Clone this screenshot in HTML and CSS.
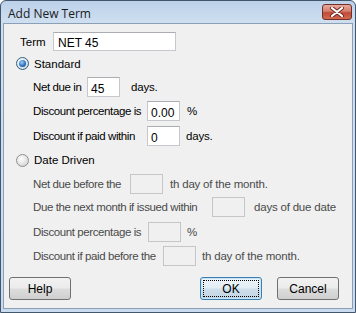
FILE: index.html
```html
<!DOCTYPE html>
<html lang="en">
<head>
    <meta charset="UTF-8">
    <title>Add New Term</title>
    <link rel="stylesheet" href="styles.css">
</head>
<body>
    <div class="window">
        <div class="titlebar">
            <span class="title">Add New Term</span>
            <span class="close-btn">
                <svg width="16" height="10" viewBox="0 0 16 10">
                    <path d="M3 1 L13 9 M13 1 L3 9" stroke="#6b2a22" stroke-width="4" stroke-linecap="round"/>
                    <path d="M3 1 L13 9 M13 1 L3 9" stroke="#fff" stroke-width="2.2" stroke-linecap="round"/>
                </svg>
            </span>
        </div>
        <div class="content">
            <div class="row term-row">
                <span class="term-label">Term</span>
                <div class="field term-field">NET 45</div>
            </div>

            <div class="row radio-row r-std">
                <span class="radio checked"></span>
                <span>Standard</span>
            </div>
            <div class="row sub h24">
                <span class="lbl w54">Net due in</span>
                <div class="field small">45</div>
                <span class="after a11">days.</span>
            </div>
            <div class="row sub h24">
                <span class="lbl w114">Discount percentage is</span>
                <div class="field small">0.00</div>
                <span class="after a7">%</span>
            </div>
            <div class="row sub h25">
                <span class="lbl w114">Discount if paid within</span>
                <div class="field small">0</div>
                <span class="after a6">days.</span>
            </div>

            <div class="row radio-row r-dd">
                <span class="radio"></span>
                <span>Date Driven</span>
            </div>
            <div class="row sub disabled h23">
                <span class="lbl w97">Net due before the</span>
                <div class="field small"></div>
                <span class="after a7">th day of the month.</span>
            </div>
            <div class="row sub disabled h24">
                <span class="lbl w179">Due the next month if issued within</span>
                <div class="field small"></div>
                <span class="after a9">days of due date</span>
            </div>
            <div class="row sub disabled h25">
                <span class="lbl w115">Discount percentage is</span>
                <div class="field small"></div>
                <span class="after a6">%</span>
            </div>
            <div class="row sub disabled h23">
                <span class="lbl w130">Discount if paid before the</span>
                <div class="field small"></div>
                <span class="after a6">th day of the month.</span>
            </div>

            <div class="buttons">
                <button class="btn">Help</button>
                <div class="spacer"></div>
                <button class="btn default"><span class="focus">OK</span></button>
                <button class="btn">Cancel</button>
            </div>
        </div>
    </div>
</body>
</html>
```

FILE: styles.css
```css
body {
    margin: 0;
    background: #fff;
    font-family: "Liberation Sans", Arial, sans-serif;
    font-size: 12px;
}
.window {
    width: 356px;
    height: 313px;
    box-sizing: border-box;
    border: 1px solid #42566c;
    border-radius: 6px 6px 0 0;
    background: linear-gradient(to bottom, #bcd1ea, #cfdff0 22px, #cadbef);
    padding: 0 2px 3px 2px;
    display: flex;
    flex-direction: column;
}
.titlebar {
    height: 22px;
    display: flex;
    align-items: center;
    position: relative;
}
.title {
    margin-left: 5px;
    margin-top: 2px;
    font-family: "Open Sans", "Liberation Sans", sans-serif;
    font-size: 12px;
    color: #1a1a1a;
}
.close-btn {
    position: absolute;
    right: 1px;
    top: 3px;
    width: 30px;
    height: 16px;
    box-sizing: border-box;
    border: 1px solid #6e3028;
    border-radius: 3px;
    background: linear-gradient(to bottom, #e6a99d, #d47d6c 45%, #c14a36 55%, #d26a50);
    display: flex;
    align-items: center;
    justify-content: center;
}
.content {
    flex: 1;
    background: #f0f0f0;
    border: 1px solid #8a9fb8;
    padding: 7px 0 0 0;
    color: #000;
}
.row {
    display: flex;
    align-items: center;
    white-space: nowrap;
}
.term-row {
    height: 21px;
}
.term-label {
    margin-left: 16px;
    width: 33px;
    font-size: 11.5px;
}
.field {
    box-sizing: border-box;
    background: #fff;
    border: 1px solid #c5c8cc;
    border-top-color: #abadb3;
    font-size: 12px;
    flex-shrink: 0;
}
.term-field {
    width: 123px;
    height: 19px;
    padding: 3px 0 0 4px;
}
.small {
    width: 33px;
    height: 20px;
    padding: 4px 0 0 3px;
}
.radio-row {
    padding-left: 12px;
    font-size: 11.5px;
}
.r-std {
    height: 23px;
}
.r-dd {
    height: 24px;
}
.radio {
    width: 13px;
    height: 13px;
    box-sizing: border-box;
    border-radius: 50%;
    border: 1px solid #8f8f8f;
    background: radial-gradient(circle at 40% 35%, #ffffff, #e0e0e0 60%, #c8c8c8);
    margin-right: 5px;
    display: flex;
    align-items: center;
    justify-content: center;
}
.radio.checked {
    border-color: #2c628b;
}
.radio.checked::after {
    content: "";
    width: 7px;
    height: 7px;
    border-radius: 50%;
    background: radial-gradient(circle at 40% 35%, #9fd0f6, #2b73c8 55%, #0d3f7d);
}
.sub {
    padding-left: 29px;
    font-size: 11.5px;
}
.h23 { height: 23px; }
.h24 { height: 24px; }
.h25 { height: 25px; }
.lbl {
    letter-spacing: -0.4px;
    flex-shrink: 0;
}
.w54 { width: 54px; }
.w97 { width: 97px; }
.w114 { width: 114px; }
.w115 { width: 115px; }
.w130 { width: 130px; }
.w179 { width: 179px; }
.after {
    letter-spacing: -0.2px;
}
.a6 { margin-left: 6px; }
.a7 { margin-left: 7px; }
.a9 { margin-left: 9px; }
.a11 { margin-left: 11px; }
.disabled {
    color: #4a4a4a;
}
.disabled .field {
    background: #f0f0f0;
    border-color: #c6c6c6;
}
.buttons {
    display: flex;
    margin-top: 10px;
    padding: 0 13px 0 5px;
    gap: 15px;
}
.spacer {
    flex: 1;
}
.btn {
    width: 62px;
    height: 23px;
    box-sizing: border-box;
    border: 1px solid #707070;
    border-radius: 3px;
    background: linear-gradient(to bottom, #f2f2f2, #ebebeb 48%, #dddddd 52%, #cfcfcf);
    font-family: "Liberation Sans", Arial, sans-serif;
    font-size: 12px;
    color: #000;
    padding: 0;
}
.btn.default {
    border-color: #3c7fb1;
    box-shadow: inset 0 0 0 1px #c6e4f7;
    background: linear-gradient(to bottom, #eef5fa, #e2edf5 48%, #cfdfeb 52%, #c2d5e4);
    padding: 2px;
}
.focus {
    display: flex;
    align-items: center;
    justify-content: center;
    height: 100%;
    border: 1px dotted #000;
    box-sizing: border-box;
}
```
